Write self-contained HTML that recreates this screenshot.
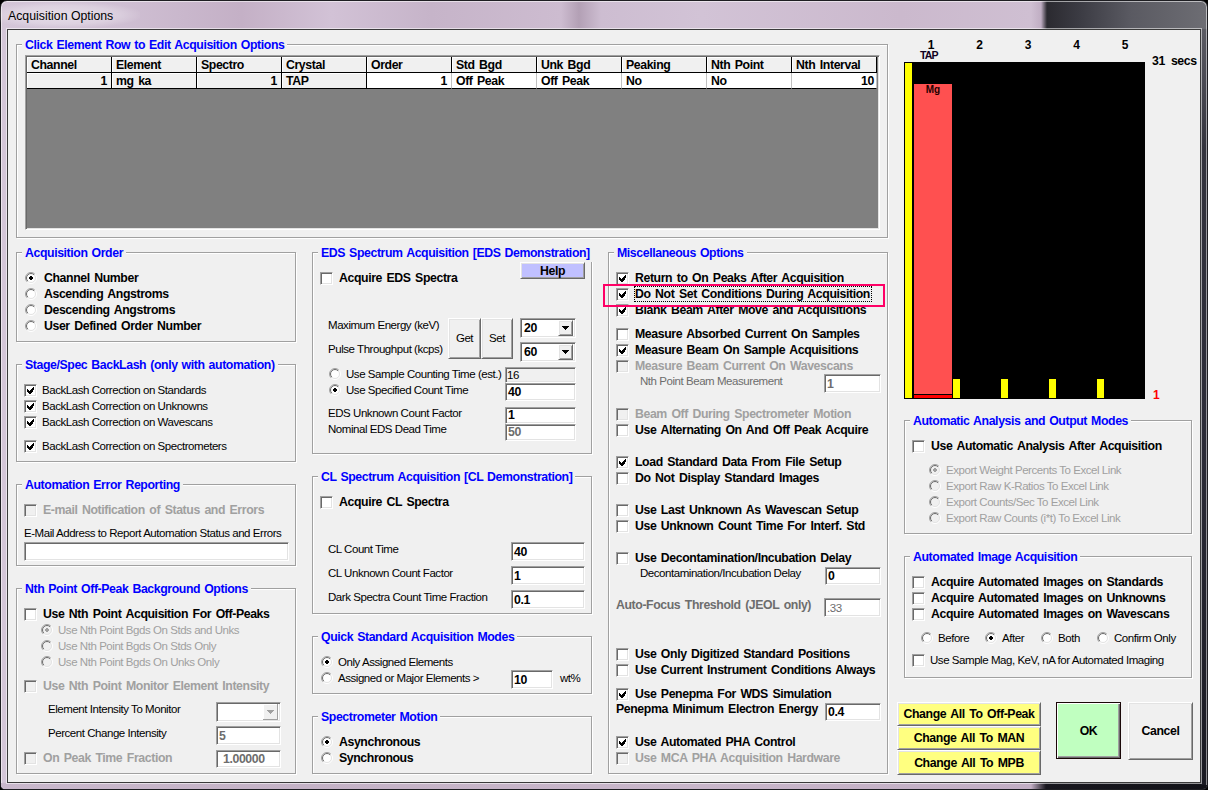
<!DOCTYPE html><html><head><meta charset="utf-8"><style>
*{margin:0;padding:0;box-sizing:border-box}
html,body{width:1208px;height:790px;overflow:hidden;background:#000}
body{position:relative;font-family:"Liberation Sans",sans-serif}
.b,.r,.gt{position:absolute;white-space:pre}
.b{font:bold 12.3px/12.3px "Liberation Sans",sans-serif;letter-spacing:-0.4px;word-spacing:1.5px}
.r{font:11.5px/11.5px "Liberation Sans",sans-serif;letter-spacing:-0.45px}
.gt{font:bold 12.3px/17px "Liberation Sans",sans-serif;letter-spacing:-0.4px;word-spacing:1px;color:#0000FF;background:#F0F0F0;padding:0 3px;height:17px}
.gb{position:absolute;border:1px solid #A0A0A0;box-shadow:inset 1px 1px 0 #fff,1px 1px 0 #fff}
.cb{position:absolute;width:13px;height:13px;border:1px solid;border-color:#A0A0A0 #fff #fff #A0A0A0;box-shadow:inset 1px 1px 0 #696969,inset -1px -1px 0 #E3E3E3}
.cb svg{left:2px!important;top:2px!important}
.rd{position:absolute}
.tb{position:absolute;border:1px solid;border-color:#A0A0A0 #fff #fff #A0A0A0;box-shadow:inset 1px 1px 0 #696969,inset -1px -1px 0 #E3E3E3}
.btn{position:absolute;border:1px solid;border-color:#fff #696969 #696969 #fff;box-shadow:inset 1px 1px 0 #E3E3E3,inset -1px -1px 0 #A0A0A0}
.dk{border-color:#1a0808;box-shadow:inset 1px 1px 0 #fff,inset -1px -1px 0 #696969,inset -2px -2px 0 #A0A0A0}
.d{color:#A0A0A0}

#frame{position:absolute;left:0;top:0;width:1208px;height:790px;border-radius:7px 7px 5px 5px;border:1px solid #1e1e22;overflow:hidden;
 background:linear-gradient(90deg,#d4c6d8 0px,#cfbfd3 120px,#c4b0c6 240px,#d2c2d6 330px,#c6b4c9 430px,#cdbcd0 560px,#b3a0b5 578px,#cdbdd1 600px,#d2c3d6 700px,#cbb9cd 900px,#cfbfd2 1030px,#c0aec3 1040px,#2b2a30 1046px,#3c3c44 1080px,#5a5a62 1130px,#6e6e74 1208px);
 box-shadow:inset 0 0 0 1px rgba(255,255,255,.55)}
#client{position:absolute;left:7px;top:29px;width:1194px;height:754px;background:#F0F0F0;border:1px solid #3a3a3a;box-shadow:0 0 0 1px rgba(255,255,255,.55)}
.hc{position:absolute;width:85px;height:16px;background:#F0F0F0;border-right:1px solid #000;border-bottom:1px solid #000;box-shadow:inset 1px 1px 0 #fff}
.dcw{position:absolute;width:85px;height:16px;background:#fff;border-right:1px solid #C0C0C0;border-bottom:1px solid #000}
</style></head><body><div id="frame"></div>
<div style="position:absolute;left:1px;top:783px;width:1206px;height:6px;border-radius:0 0 4px 4px;background:linear-gradient(90deg,#c9b8cc 0px,#c4b2c6 300px,#c8b6ca 700px,#c2aec4 1030px,#18171e 1045px,#121218 1208px)"></div>
<div style="position:absolute;left:1201px;top:29px;width:6px;height:756px;background:linear-gradient(180deg,#5c5c64 0px,#33333d 120px,#2c2c38 400px,#1a1a22 756px);box-shadow:inset -1px 0 0 rgba(255,255,255,.5)"></div>
<div id="client"></div>
<div style="position:absolute;left:-10px;top:2px;width:150px;height:26px;background:radial-gradient(ellipse at center,rgba(255,255,255,.45) 0%,rgba(255,255,255,.25) 50%,rgba(255,255,255,0) 75%)"></div>
<div class="r" style="left:8px;top:9.59px;font-size:12.3px;line-height:12.3px;letter-spacing:0">Acquisition Options</div>
<div class="gb" style="left:16px;top:44px;width:872px;height:194px"></div>
<div class="gt" style="left:22px;top:37px">Click Element Row to Edit Acquisition Options</div>
<div class="tb" style="left:25px;top:55px;width:855px;height:175px;background:#808080"></div>
<div class="hc" style="left:27px;top:57px"></div>
<div class="b" style="left:31px;top:58.59px;">Channel</div>
<div class="hc" style="left:27px;top:73px"></div>
<div class="b" style="left:27px;top:74.59px;width:80px;text-align:right">1</div>
<div class="hc" style="left:112px;top:57px"></div>
<div class="b" style="left:116px;top:58.59px;">Element</div>
<div class="hc" style="left:112px;top:73px"></div>
<div class="b" style="left:116px;top:74.59px;">mg ka</div>
<div class="hc" style="left:197px;top:57px"></div>
<div class="b" style="left:201px;top:58.59px;">Spectro</div>
<div class="hc" style="left:197px;top:73px"></div>
<div class="b" style="left:197px;top:74.59px;width:80px;text-align:right">1</div>
<div class="hc" style="left:282px;top:57px"></div>
<div class="b" style="left:286px;top:58.59px;">Crystal</div>
<div class="hc" style="left:282px;top:73px"></div>
<div class="b" style="left:286px;top:74.59px;">TAP</div>
<div class="hc" style="left:367px;top:57px"></div>
<div class="b" style="left:371px;top:58.59px;">Order</div>
<div class="dcw" style="left:367px;top:73px"></div>
<div class="b" style="left:367px;top:74.59px;width:80px;text-align:right">1</div>
<div class="hc" style="left:452px;top:57px"></div>
<div class="b" style="left:456px;top:58.59px;">Std Bgd</div>
<div class="dcw" style="left:452px;top:73px"></div>
<div class="b" style="left:456px;top:74.59px;">Off Peak</div>
<div class="hc" style="left:537px;top:57px"></div>
<div class="b" style="left:541px;top:58.59px;">Unk Bgd</div>
<div class="dcw" style="left:537px;top:73px"></div>
<div class="b" style="left:541px;top:74.59px;">Off Peak</div>
<div class="hc" style="left:622px;top:57px"></div>
<div class="b" style="left:626px;top:58.59px;">Peaking</div>
<div class="dcw" style="left:622px;top:73px"></div>
<div class="b" style="left:626px;top:74.59px;">No</div>
<div class="hc" style="left:707px;top:57px"></div>
<div class="b" style="left:711px;top:58.59px;">Nth Point</div>
<div class="dcw" style="left:707px;top:73px"></div>
<div class="b" style="left:711px;top:74.59px;">No</div>
<div class="hc" style="left:792px;top:57px"></div>
<div class="b" style="left:796px;top:58.59px;">Nth Interval</div>
<div class="dcw" style="left:792px;top:73px"></div>
<div class="b" style="left:792px;top:74.59px;width:82px;text-align:right">10</div>
<div class="gb" style="left:16px;top:252px;width:280px;height:90px"></div>
<div class="gt" style="left:22px;top:245px">Acquisition Order</div>
<svg class="rd" style="left:25px;top:272px" width="12" height="12" viewBox="0 0 12 12"><defs><linearGradient id="g1" x1="0" y1="0" x2="1" y2="1"><stop offset="0.45" stop-color="#A0A0A0"/><stop offset="0.55" stop-color="#FFFFFF"/></linearGradient><linearGradient id="g2" x1="0" y1="0" x2="1" y2="1"><stop offset="0.45" stop-color="#696969"/><stop offset="0.55" stop-color="#E3E3E3"/></linearGradient></defs><circle cx="6" cy="6" r="5.5" fill="none" stroke="url(#g1)" stroke-width="1"/><circle cx="6" cy="6" r="4.5" fill="#FFF" stroke="url(#g2)" stroke-width="1"/><rect x="4" y="5" width="4" height="2" fill="#000"/><rect x="5" y="4" width="2" height="4" fill="#000"/></svg>
<div class="b" style="left:44px;top:271.59px;">Channel Number</div>
<svg class="rd" style="left:25px;top:288px" width="12" height="12" viewBox="0 0 12 12"><defs><linearGradient id="g1" x1="0" y1="0" x2="1" y2="1"><stop offset="0.45" stop-color="#A0A0A0"/><stop offset="0.55" stop-color="#FFFFFF"/></linearGradient><linearGradient id="g2" x1="0" y1="0" x2="1" y2="1"><stop offset="0.45" stop-color="#696969"/><stop offset="0.55" stop-color="#E3E3E3"/></linearGradient></defs><circle cx="6" cy="6" r="5.5" fill="none" stroke="url(#g1)" stroke-width="1"/><circle cx="6" cy="6" r="4.5" fill="#FFF" stroke="url(#g2)" stroke-width="1"/></svg>
<div class="b" style="left:44px;top:287.59px;">Ascending Angstroms</div>
<svg class="rd" style="left:25px;top:304px" width="12" height="12" viewBox="0 0 12 12"><defs><linearGradient id="g1" x1="0" y1="0" x2="1" y2="1"><stop offset="0.45" stop-color="#A0A0A0"/><stop offset="0.55" stop-color="#FFFFFF"/></linearGradient><linearGradient id="g2" x1="0" y1="0" x2="1" y2="1"><stop offset="0.45" stop-color="#696969"/><stop offset="0.55" stop-color="#E3E3E3"/></linearGradient></defs><circle cx="6" cy="6" r="5.5" fill="none" stroke="url(#g1)" stroke-width="1"/><circle cx="6" cy="6" r="4.5" fill="#FFF" stroke="url(#g2)" stroke-width="1"/></svg>
<div class="b" style="left:44px;top:303.59px;">Descending Angstroms</div>
<svg class="rd" style="left:25px;top:320px" width="12" height="12" viewBox="0 0 12 12"><defs><linearGradient id="g1" x1="0" y1="0" x2="1" y2="1"><stop offset="0.45" stop-color="#A0A0A0"/><stop offset="0.55" stop-color="#FFFFFF"/></linearGradient><linearGradient id="g2" x1="0" y1="0" x2="1" y2="1"><stop offset="0.45" stop-color="#696969"/><stop offset="0.55" stop-color="#E3E3E3"/></linearGradient></defs><circle cx="6" cy="6" r="5.5" fill="none" stroke="url(#g1)" stroke-width="1"/><circle cx="6" cy="6" r="4.5" fill="#FFF" stroke="url(#g2)" stroke-width="1"/></svg>
<div class="b" style="left:44px;top:319.59px;">User Defined Order Number</div>
<div class="gb" style="left:16px;top:364px;width:280px;height:98px"></div>
<div class="gt" style="left:22px;top:357px">Stage/Spec BackLash (only with automation)</div>
<div class="cb" style="left:24px;top:384px;background:#FFF"><svg width="7" height="7" style="position:absolute;left:3px;top:3px" shape-rendering="crispEdges"><path d="M6 0h1v3h-1zM5 1h1v4h-1zM4 2h1v4h-1zM3 3h1v4h-1zM2 4h1v3h-1zM1 3h1v3h-1zM0 2h1v3h-1z" fill="#000"/></svg></div>
<div class="r" style="left:42px;top:385.27px;">BackLash Correction on Standards</div>
<div class="cb" style="left:24px;top:400px;background:#FFF"><svg width="7" height="7" style="position:absolute;left:3px;top:3px" shape-rendering="crispEdges"><path d="M6 0h1v3h-1zM5 1h1v4h-1zM4 2h1v4h-1zM3 3h1v4h-1zM2 4h1v3h-1zM1 3h1v3h-1zM0 2h1v3h-1z" fill="#000"/></svg></div>
<div class="r" style="left:42px;top:401.27px;">BackLash Correction on Unknowns</div>
<div class="cb" style="left:24px;top:416px;background:#FFF"><svg width="7" height="7" style="position:absolute;left:3px;top:3px" shape-rendering="crispEdges"><path d="M6 0h1v3h-1zM5 1h1v4h-1zM4 2h1v4h-1zM3 3h1v4h-1zM2 4h1v3h-1zM1 3h1v3h-1zM0 2h1v3h-1z" fill="#000"/></svg></div>
<div class="r" style="left:42px;top:417.27px;">BackLash Correction on Wavescans</div>
<div class="cb" style="left:24px;top:440px;background:#FFF"><svg width="7" height="7" style="position:absolute;left:3px;top:3px" shape-rendering="crispEdges"><path d="M6 0h1v3h-1zM5 1h1v4h-1zM4 2h1v4h-1zM3 3h1v4h-1zM2 4h1v3h-1zM1 3h1v3h-1zM0 2h1v3h-1z" fill="#000"/></svg></div>
<div class="r" style="left:42px;top:441.27px;">BackLash Correction on Spectrometers</div>
<div class="gb" style="left:16px;top:484px;width:280px;height:82px"></div>
<div class="gt" style="left:22px;top:477px">Automation Error Reporting</div>
<div class="cb" style="left:24px;top:504px;background:#F0F0F0"></div>
<div class="b" style="left:43px;top:503.59px;color:#A0A0A0;">E-mail Notification of Status and Errors</div>
<div class="r" style="left:24px;top:528.27px;">E-Mail Address to Report Automation Status and Errors</div>
<div class="tb" style="left:24px;top:542px;width:265px;height:19px;background:#FFF"></div>
<div class="gb" style="left:16px;top:588px;width:280px;height:186px"></div>
<div class="gt" style="left:22px;top:581px">Nth Point Off-Peak Background Options</div>
<div class="cb" style="left:24px;top:608px;background:#FFF"></div>
<div class="b" style="left:43px;top:607.59px;">Use Nth Point Acquisition For Off-Peaks</div>
<svg class="rd" style="left:41px;top:624px" width="12" height="12" viewBox="0 0 12 12"><defs><linearGradient id="g1" x1="0" y1="0" x2="1" y2="1"><stop offset="0.45" stop-color="#A0A0A0"/><stop offset="0.55" stop-color="#FFFFFF"/></linearGradient><linearGradient id="g2" x1="0" y1="0" x2="1" y2="1"><stop offset="0.45" stop-color="#696969"/><stop offset="0.55" stop-color="#E3E3E3"/></linearGradient></defs><circle cx="6" cy="6" r="5.5" fill="none" stroke="url(#g1)" stroke-width="1"/><circle cx="6" cy="6" r="4.5" fill="#F0F0F0" stroke="url(#g2)" stroke-width="1"/><rect x="4" y="5" width="4" height="2" fill="#A0A0A0"/><rect x="5" y="4" width="2" height="4" fill="#A0A0A0"/></svg>
<div class="r" style="left:58px;top:625.27px;color:#A0A0A0;">Use Nth Point Bgds On Stds and Unks</div>
<svg class="rd" style="left:41px;top:640px" width="12" height="12" viewBox="0 0 12 12"><defs><linearGradient id="g1" x1="0" y1="0" x2="1" y2="1"><stop offset="0.45" stop-color="#A0A0A0"/><stop offset="0.55" stop-color="#FFFFFF"/></linearGradient><linearGradient id="g2" x1="0" y1="0" x2="1" y2="1"><stop offset="0.45" stop-color="#696969"/><stop offset="0.55" stop-color="#E3E3E3"/></linearGradient></defs><circle cx="6" cy="6" r="5.5" fill="none" stroke="url(#g1)" stroke-width="1"/><circle cx="6" cy="6" r="4.5" fill="#F0F0F0" stroke="url(#g2)" stroke-width="1"/></svg>
<div class="r" style="left:58px;top:641.27px;color:#A0A0A0;">Use Nth Point Bgds On Stds Only</div>
<svg class="rd" style="left:41px;top:656px" width="12" height="12" viewBox="0 0 12 12"><defs><linearGradient id="g1" x1="0" y1="0" x2="1" y2="1"><stop offset="0.45" stop-color="#A0A0A0"/><stop offset="0.55" stop-color="#FFFFFF"/></linearGradient><linearGradient id="g2" x1="0" y1="0" x2="1" y2="1"><stop offset="0.45" stop-color="#696969"/><stop offset="0.55" stop-color="#E3E3E3"/></linearGradient></defs><circle cx="6" cy="6" r="5.5" fill="none" stroke="url(#g1)" stroke-width="1"/><circle cx="6" cy="6" r="4.5" fill="#F0F0F0" stroke="url(#g2)" stroke-width="1"/></svg>
<div class="r" style="left:58px;top:657.27px;color:#A0A0A0;">Use Nth Point Bgds On Unks Only</div>
<div class="cb" style="left:24px;top:680px;background:#F0F0F0"></div>
<div class="b" style="left:43px;top:679.59px;color:#A0A0A0;">Use Nth Point Monitor Element Intensity</div>
<div class="r" style="left:48px;top:704.27px;">Element Intensity To Monitor</div>
<div class="tb" style="left:216px;top:702px;width:65px;height:20px;background:#FFF"></div>
<div style="position:absolute;left:263px;top:704px;width:15px;height:16px;background:#F0F0F0;border-bottom:1px solid #A0A0A0;border-right:1px solid #A0A0A0;box-shadow:inset 1px 1px 0 #fff"></div>
<svg style="position:absolute;left:267px;top:710px" width="7" height="4" shape-rendering="crispEdges"><path d="M0 0h7v1h-7zM1 1h5v1h-5zM2 2h3v1h-3zM3 3h1v1h-1z" fill="#A0A0A0"/></svg>
<div class="r" style="left:48px;top:728.27px;">Percent Change Intensity</div>
<div class="tb" style="left:216px;top:726px;width:65px;height:19px;background:#FFF"></div>
<div class="b" style="left:219px;top:729.59px;color:#6D6D6D;">5</div>
<div class="cb" style="left:24px;top:752px;background:#F0F0F0"></div>
<div class="b" style="left:43px;top:751.59px;color:#A0A0A0;">On Peak Time Fraction</div>
<div class="tb" style="left:216px;top:750px;width:65px;height:18px;background:#FFF"></div>
<div class="b" style="left:223px;top:752.59px;color:#6D6D6D;">1.00000</div>
<div class="gb" style="left:312px;top:252px;width:280px;height:202px"></div>
<div class="gt" style="left:318px;top:245px">EDS Spectrum Acquisition [EDS Demonstration]</div>
<div class="btn" style="left:520px;top:262px;width:65px;height:17px;background:#C0C0FF"></div>
<div class="b" style="left:520px;top:264.65px;width:65px;text-align:center">Help</div>
<div class="cb" style="left:320px;top:272px;background:#FFF"></div>
<div class="b" style="left:339px;top:271.59px;">Acquire EDS Spectra</div>
<div class="r" style="left:328px;top:320.27px;">Maximum Energy (keV)</div>
<div class="r" style="left:328px;top:344.27px;">Pulse Throughput (kcps)</div>
<div class="btn" style="left:448px;top:318px;width:33px;height:41px;background:#F0F0F0"></div>
<div class="r" style="left:448px;top:333.05px;width:33px;text-align:center">Get</div>
<div class="btn" style="left:481px;top:318px;width:32px;height:41px;background:#F0F0F0"></div>
<div class="r" style="left:481px;top:333.05px;width:32px;text-align:center">Set</div>
<div class="tb" style="left:520px;top:318px;width:56px;height:20px;background:#FFF"></div>
<div class="btn" style="left:558px;top:320px;width:15px;height:16px;background:#F0F0F0"></div>
<svg style="position:absolute;left:562px;top:326px" width="7" height="4" shape-rendering="crispEdges"><path d="M0 0h7v1h-7zM1 1h5v1h-5zM2 2h3v1h-3zM3 3h1v1h-1z" fill="#000"/></svg>
<div class="b" style="left:524px;top:321.59px;">20</div>
<div class="tb" style="left:520px;top:342px;width:56px;height:20px;background:#FFF"></div>
<div class="btn" style="left:558px;top:344px;width:15px;height:16px;background:#F0F0F0"></div>
<svg style="position:absolute;left:562px;top:350px" width="7" height="4" shape-rendering="crispEdges"><path d="M0 0h7v1h-7zM1 1h5v1h-5zM2 2h3v1h-3zM3 3h1v1h-1z" fill="#000"/></svg>
<div class="b" style="left:524px;top:345.59px;">60</div>
<svg class="rd" style="left:329px;top:368px" width="12" height="12" viewBox="0 0 12 12"><defs><linearGradient id="g1" x1="0" y1="0" x2="1" y2="1"><stop offset="0.45" stop-color="#A0A0A0"/><stop offset="0.55" stop-color="#FFFFFF"/></linearGradient><linearGradient id="g2" x1="0" y1="0" x2="1" y2="1"><stop offset="0.45" stop-color="#696969"/><stop offset="0.55" stop-color="#E3E3E3"/></linearGradient></defs><circle cx="6" cy="6" r="5.5" fill="none" stroke="url(#g1)" stroke-width="1"/><circle cx="6" cy="6" r="4.5" fill="#FFF" stroke="url(#g2)" stroke-width="1"/></svg>
<div class="r" style="left:346px;top:369.27px;">Use Sample Counting Time (est.)</div>
<div class="tb" style="left:505px;top:367px;width:71px;height:16px;background:#F0F0F0"></div>
<div class="r" style="left:507px;top:370.27px;">16</div>
<svg class="rd" style="left:329px;top:384px" width="12" height="12" viewBox="0 0 12 12"><defs><linearGradient id="g1" x1="0" y1="0" x2="1" y2="1"><stop offset="0.45" stop-color="#A0A0A0"/><stop offset="0.55" stop-color="#FFFFFF"/></linearGradient><linearGradient id="g2" x1="0" y1="0" x2="1" y2="1"><stop offset="0.45" stop-color="#696969"/><stop offset="0.55" stop-color="#E3E3E3"/></linearGradient></defs><circle cx="6" cy="6" r="5.5" fill="none" stroke="url(#g1)" stroke-width="1"/><circle cx="6" cy="6" r="4.5" fill="#FFF" stroke="url(#g2)" stroke-width="1"/><rect x="4" y="5" width="4" height="2" fill="#000"/><rect x="5" y="4" width="2" height="4" fill="#000"/></svg>
<div class="r" style="left:346px;top:385.27px;">Use Specified Count Time</div>
<div class="tb" style="left:505px;top:383px;width:71px;height:18px;background:#FFF"></div>
<div class="b" style="left:508px;top:385.59px;">40</div>
<div class="r" style="left:328px;top:408.27px;">EDS Unknown Count Factor</div>
<div class="tb" style="left:505px;top:407px;width:71px;height:17px;background:#FFF"></div>
<div class="b" style="left:508px;top:408.59px;">1</div>
<div class="r" style="left:328px;top:424.27px;">Nominal EDS Dead Time</div>
<div class="tb" style="left:505px;top:424px;width:71px;height:17px;background:#FFF"></div>
<div class="b" style="left:508px;top:425.59px;color:#6D6D6D;">50</div>
<div class="gb" style="left:312px;top:476px;width:280px;height:138px"></div>
<div class="gt" style="left:318px;top:469px">CL Spectrum Acquisition [CL Demonstration]</div>
<div class="cb" style="left:320px;top:496px;background:#FFF"></div>
<div class="b" style="left:339px;top:495.59px;">Acquire CL Spectra</div>
<div class="r" style="left:328px;top:544.27px;">CL Count Time</div>
<div class="tb" style="left:511px;top:542px;width:74px;height:19px;background:#FFF"></div>
<div class="b" style="left:514px;top:545.59px;">40</div>
<div class="r" style="left:328px;top:568.27px;">CL Unknown Count Factor</div>
<div class="tb" style="left:511px;top:566px;width:74px;height:19px;background:#FFF"></div>
<div class="b" style="left:514px;top:569.59px;">1</div>
<div class="r" style="left:328px;top:592.27px;">Dark Spectra Count Time Fraction</div>
<div class="tb" style="left:511px;top:590px;width:74px;height:19px;background:#FFF"></div>
<div class="b" style="left:514px;top:593.59px;">0.1</div>
<div class="gb" style="left:312px;top:636px;width:280px;height:58px"></div>
<div class="gt" style="left:318px;top:629px">Quick Standard Acquisition Modes</div>
<svg class="rd" style="left:321px;top:656px" width="12" height="12" viewBox="0 0 12 12"><defs><linearGradient id="g1" x1="0" y1="0" x2="1" y2="1"><stop offset="0.45" stop-color="#A0A0A0"/><stop offset="0.55" stop-color="#FFFFFF"/></linearGradient><linearGradient id="g2" x1="0" y1="0" x2="1" y2="1"><stop offset="0.45" stop-color="#696969"/><stop offset="0.55" stop-color="#E3E3E3"/></linearGradient></defs><circle cx="6" cy="6" r="5.5" fill="none" stroke="url(#g1)" stroke-width="1"/><circle cx="6" cy="6" r="4.5" fill="#FFF" stroke="url(#g2)" stroke-width="1"/><rect x="4" y="5" width="4" height="2" fill="#000"/><rect x="5" y="4" width="2" height="4" fill="#000"/></svg>
<div class="r" style="left:338px;top:657.27px;">Only Assigned Elements</div>
<svg class="rd" style="left:321px;top:672px" width="12" height="12" viewBox="0 0 12 12"><defs><linearGradient id="g1" x1="0" y1="0" x2="1" y2="1"><stop offset="0.45" stop-color="#A0A0A0"/><stop offset="0.55" stop-color="#FFFFFF"/></linearGradient><linearGradient id="g2" x1="0" y1="0" x2="1" y2="1"><stop offset="0.45" stop-color="#696969"/><stop offset="0.55" stop-color="#E3E3E3"/></linearGradient></defs><circle cx="6" cy="6" r="5.5" fill="none" stroke="url(#g1)" stroke-width="1"/><circle cx="6" cy="6" r="4.5" fill="#FFF" stroke="url(#g2)" stroke-width="1"/></svg>
<div class="r" style="left:338px;top:673.27px;">Assigned or Major Elements ></div>
<div class="tb" style="left:511px;top:670px;width:42px;height:19px;background:#FFF"></div>
<div class="b" style="left:514px;top:673.59px;">10</div>
<div class="r" style="left:560px;top:673.27px;">wt%</div>
<div class="gb" style="left:312px;top:716px;width:280px;height:58px"></div>
<div class="gt" style="left:318px;top:709px">Spectrometer Motion</div>
<svg class="rd" style="left:321px;top:736px" width="12" height="12" viewBox="0 0 12 12"><defs><linearGradient id="g1" x1="0" y1="0" x2="1" y2="1"><stop offset="0.45" stop-color="#A0A0A0"/><stop offset="0.55" stop-color="#FFFFFF"/></linearGradient><linearGradient id="g2" x1="0" y1="0" x2="1" y2="1"><stop offset="0.45" stop-color="#696969"/><stop offset="0.55" stop-color="#E3E3E3"/></linearGradient></defs><circle cx="6" cy="6" r="5.5" fill="none" stroke="url(#g1)" stroke-width="1"/><circle cx="6" cy="6" r="4.5" fill="#FFF" stroke="url(#g2)" stroke-width="1"/><rect x="4" y="5" width="4" height="2" fill="#000"/><rect x="5" y="4" width="2" height="4" fill="#000"/></svg>
<div class="b" style="left:339px;top:735.59px;">Asynchronous</div>
<svg class="rd" style="left:321px;top:752px" width="12" height="12" viewBox="0 0 12 12"><defs><linearGradient id="g1" x1="0" y1="0" x2="1" y2="1"><stop offset="0.45" stop-color="#A0A0A0"/><stop offset="0.55" stop-color="#FFFFFF"/></linearGradient><linearGradient id="g2" x1="0" y1="0" x2="1" y2="1"><stop offset="0.45" stop-color="#696969"/><stop offset="0.55" stop-color="#E3E3E3"/></linearGradient></defs><circle cx="6" cy="6" r="5.5" fill="none" stroke="url(#g1)" stroke-width="1"/><circle cx="6" cy="6" r="4.5" fill="#FFF" stroke="url(#g2)" stroke-width="1"/></svg>
<div class="b" style="left:339px;top:751.59px;">Synchronous</div>
<div class="gb" style="left:608px;top:252px;width:280px;height:522px"></div>
<div class="gt" style="left:614px;top:245px">Miscellaneous Options</div>
<div class="cb" style="left:616px;top:272px;background:#FFF"><svg width="7" height="7" style="position:absolute;left:3px;top:3px" shape-rendering="crispEdges"><path d="M6 0h1v3h-1zM5 1h1v4h-1zM4 2h1v4h-1zM3 3h1v4h-1zM2 4h1v3h-1zM1 3h1v3h-1zM0 2h1v3h-1z" fill="#000"/></svg></div>
<div class="b" style="left:635px;top:271.59px;">Return to On Peaks After Acquisition</div>
<div class="cb" style="left:616px;top:288px;background:#FFF"><svg width="7" height="7" style="position:absolute;left:3px;top:3px" shape-rendering="crispEdges"><path d="M6 0h1v3h-1zM5 1h1v4h-1zM4 2h1v4h-1zM3 3h1v4h-1zM2 4h1v3h-1zM1 3h1v3h-1zM0 2h1v3h-1z" fill="#000"/></svg></div>
<div class="b" style="left:635px;top:287.59px;">Do Not Set Conditions During Acquisition</div>
<div class="cb" style="left:616px;top:304px;background:#FFF"><svg width="7" height="7" style="position:absolute;left:3px;top:3px" shape-rendering="crispEdges"><path d="M6 0h1v3h-1zM5 1h1v4h-1zM4 2h1v4h-1zM3 3h1v4h-1zM2 4h1v3h-1zM1 3h1v3h-1zM0 2h1v3h-1z" fill="#000"/></svg></div>
<div class="b" style="left:635px;top:303.59px;">Blank Beam After Move and Acquisitions</div>
<div class="cb" style="left:616px;top:328px;background:#FFF"></div>
<div class="b" style="left:635px;top:327.59px;">Measure Absorbed Current On Samples</div>
<div class="cb" style="left:616px;top:344px;background:#FFF"><svg width="7" height="7" style="position:absolute;left:3px;top:3px" shape-rendering="crispEdges"><path d="M6 0h1v3h-1zM5 1h1v4h-1zM4 2h1v4h-1zM3 3h1v4h-1zM2 4h1v3h-1zM1 3h1v3h-1zM0 2h1v3h-1z" fill="#000"/></svg></div>
<div class="b" style="left:635px;top:343.59px;">Measure Beam On Sample Acquisitions</div>
<div class="cb" style="left:616px;top:360px;background:#F0F0F0"></div>
<div class="b" style="left:635px;top:359.59px;color:#A0A0A0;">Measure Beam Current On Wavescans</div>
<div class="cb" style="left:616px;top:408px;background:#F0F0F0"></div>
<div class="b" style="left:635px;top:407.59px;color:#A0A0A0;">Beam Off During Spectrometer Motion</div>
<div class="cb" style="left:616px;top:424px;background:#FFF"></div>
<div class="b" style="left:635px;top:423.59px;">Use Alternating On And Off Peak Acquire</div>
<div class="cb" style="left:616px;top:456px;background:#FFF"><svg width="7" height="7" style="position:absolute;left:3px;top:3px" shape-rendering="crispEdges"><path d="M6 0h1v3h-1zM5 1h1v4h-1zM4 2h1v4h-1zM3 3h1v4h-1zM2 4h1v3h-1zM1 3h1v3h-1zM0 2h1v3h-1z" fill="#000"/></svg></div>
<div class="b" style="left:635px;top:455.59px;">Load Standard Data From File Setup</div>
<div class="cb" style="left:616px;top:472px;background:#FFF"></div>
<div class="b" style="left:635px;top:471.59px;">Do Not Display Standard Images</div>
<div class="cb" style="left:616px;top:504px;background:#FFF"></div>
<div class="b" style="left:635px;top:503.59px;">Use Last Unknown As Wavescan Setup</div>
<div class="cb" style="left:616px;top:520px;background:#FFF"></div>
<div class="b" style="left:635px;top:519.59px;">Use Unknown Count Time For Interf. Std</div>
<div class="cb" style="left:616px;top:552px;background:#FFF"></div>
<div class="b" style="left:635px;top:551.59px;">Use Decontamination/Incubation Delay</div>
<div class="cb" style="left:616px;top:648px;background:#FFF"></div>
<div class="b" style="left:635px;top:647.59px;">Use Only Digitized Standard Positions</div>
<div class="cb" style="left:616px;top:664px;background:#FFF"></div>
<div class="b" style="left:635px;top:663.59px;">Use Current Instrument Conditions Always</div>
<div class="cb" style="left:616px;top:688px;background:#FFF"><svg width="7" height="7" style="position:absolute;left:3px;top:3px" shape-rendering="crispEdges"><path d="M6 0h1v3h-1zM5 1h1v4h-1zM4 2h1v4h-1zM3 3h1v4h-1zM2 4h1v3h-1zM1 3h1v3h-1zM0 2h1v3h-1z" fill="#000"/></svg></div>
<div class="b" style="left:635px;top:687.59px;">Use Penepma For WDS Simulation</div>
<div class="cb" style="left:616px;top:736px;background:#FFF"><svg width="7" height="7" style="position:absolute;left:3px;top:3px" shape-rendering="crispEdges"><path d="M6 0h1v3h-1zM5 1h1v4h-1zM4 2h1v4h-1zM3 3h1v4h-1zM2 4h1v3h-1zM1 3h1v3h-1zM0 2h1v3h-1z" fill="#000"/></svg></div>
<div class="b" style="left:635px;top:735.59px;">Use Automated PHA Control</div>
<div class="cb" style="left:616px;top:752px;background:#F0F0F0"></div>
<div class="b" style="left:635px;top:751.59px;color:#A0A0A0;">Use MCA PHA Acquisition Hardware</div>
<div class="r" style="left:640px;top:376.27px;color:#6D6D6D;">Nth Point Beam Measurement</div>
<div class="tb" style="left:824px;top:374px;width:57px;height:19px;background:#FFF"></div>
<div class="b" style="left:827px;top:377.59px;color:#6D6D6D;">1</div>
<div class="r" style="left:640px;top:568.27px;">Decontamination/Incubation Delay</div>
<div class="tb" style="left:825px;top:567px;width:56px;height:18px;background:#FFF"></div>
<div class="b" style="left:828px;top:569.59px;">0</div>
<div class="b" style="left:616px;top:598.59px;color:#6D6D6D;">Auto-Focus Threshold (JEOL only)</div>
<div class="tb" style="left:824px;top:598px;width:57px;height:19px;background:#FFF"></div>
<div class="r" style="left:827px;top:603.27px;color:#6D6D6D;">.33</div>
<div class="b" style="left:616px;top:702.59px;">Penepma Minimum Electron Energy</div>
<div class="tb" style="left:825px;top:703px;width:56px;height:18px;background:#FFF"></div>
<div class="b" style="left:828px;top:705.59px;">0.4</div>
<div style="position:absolute;left:634px;top:286px;width:238px;height:16px;border:1px dotted #000"></div>
<div style="position:absolute;left:603px;top:284px;width:282px;height:23px;border:2px solid #FF0066"></div>
<div class="b" style="left:921.0px;top:39px;width:20px;text-align:center;font-size:12px;letter-spacing:0">1</div>
<div class="b" style="left:969.5px;top:39px;width:20px;text-align:center;font-size:12px;letter-spacing:0">2</div>
<div class="b" style="left:1018.0px;top:39px;width:20px;text-align:center;font-size:12px;letter-spacing:0">3</div>
<div class="b" style="left:1066.5px;top:39px;width:20px;text-align:center;font-size:12px;letter-spacing:0">4</div>
<div class="b" style="left:1115.0px;top:39px;width:20px;text-align:center;font-size:12px;letter-spacing:0">5</div>
<div class="b" style="left:920px;top:50px;font-size:10.6px;line-height:10px;color:#102;letter-spacing:-0.9px">TAP</div>
<div class="b" style="left:1152px;top:55px;word-spacing:3px">31 secs</div>
<div style="position:absolute;left:904px;top:62px;width:241px;height:337px;background:#000"></div>
<div style="position:absolute;left:905px;top:63px;width:7px;height:335px;background:#FFFF00"></div>
<div style="position:absolute;left:914px;top:84px;width:38px;height:314px;background:#FF5050"></div>
<div style="position:absolute;left:914px;top:394px;width:38px;height:4px;background:#FF0000;border-top:1px solid #000"></div>
<div class="b" style="left:914px;top:84px;width:38px;text-align:center;font-size:10px;line-height:12px;color:#200;letter-spacing:0">Mg</div>
<div style="position:absolute;left:953px;top:379px;width:7px;height:19px;background:#FFFF00"></div>
<div style="position:absolute;left:1001px;top:379px;width:7px;height:19px;background:#FFFF00"></div>
<div style="position:absolute;left:1049px;top:379px;width:7px;height:19px;background:#FFFF00"></div>
<div style="position:absolute;left:1097px;top:379px;width:7px;height:19px;background:#FFFF00"></div>
<div class="b" style="left:1153px;top:389px;color:#FF0000;font-size:12px;letter-spacing:0">1</div>
<div class="gb" style="left:904px;top:420px;width:288px;height:114px"></div>
<div class="gt" style="left:910px;top:413px">Automatic Analysis and Output Modes</div>
<div class="cb" style="left:912px;top:440px;background:#FFF"></div>
<div class="b" style="left:931px;top:439.59px;">Use Automatic Analysis After Acquisition</div>
<svg class="rd" style="left:929px;top:464px" width="12" height="12" viewBox="0 0 12 12"><defs><linearGradient id="g1" x1="0" y1="0" x2="1" y2="1"><stop offset="0.45" stop-color="#A0A0A0"/><stop offset="0.55" stop-color="#FFFFFF"/></linearGradient><linearGradient id="g2" x1="0" y1="0" x2="1" y2="1"><stop offset="0.45" stop-color="#696969"/><stop offset="0.55" stop-color="#E3E3E3"/></linearGradient></defs><circle cx="6" cy="6" r="5.5" fill="none" stroke="url(#g1)" stroke-width="1"/><circle cx="6" cy="6" r="4.5" fill="#F0F0F0" stroke="url(#g2)" stroke-width="1"/><rect x="4" y="5" width="4" height="2" fill="#A0A0A0"/><rect x="5" y="4" width="2" height="4" fill="#A0A0A0"/></svg>
<div class="r" style="left:946px;top:465.27px;color:#A0A0A0;">Export Weight Percents To Excel Link</div>
<svg class="rd" style="left:929px;top:480px" width="12" height="12" viewBox="0 0 12 12"><defs><linearGradient id="g1" x1="0" y1="0" x2="1" y2="1"><stop offset="0.45" stop-color="#A0A0A0"/><stop offset="0.55" stop-color="#FFFFFF"/></linearGradient><linearGradient id="g2" x1="0" y1="0" x2="1" y2="1"><stop offset="0.45" stop-color="#696969"/><stop offset="0.55" stop-color="#E3E3E3"/></linearGradient></defs><circle cx="6" cy="6" r="5.5" fill="none" stroke="url(#g1)" stroke-width="1"/><circle cx="6" cy="6" r="4.5" fill="#F0F0F0" stroke="url(#g2)" stroke-width="1"/></svg>
<div class="r" style="left:946px;top:481.27px;color:#A0A0A0;">Export Raw K-Ratios To Excel Link</div>
<svg class="rd" style="left:929px;top:496px" width="12" height="12" viewBox="0 0 12 12"><defs><linearGradient id="g1" x1="0" y1="0" x2="1" y2="1"><stop offset="0.45" stop-color="#A0A0A0"/><stop offset="0.55" stop-color="#FFFFFF"/></linearGradient><linearGradient id="g2" x1="0" y1="0" x2="1" y2="1"><stop offset="0.45" stop-color="#696969"/><stop offset="0.55" stop-color="#E3E3E3"/></linearGradient></defs><circle cx="6" cy="6" r="5.5" fill="none" stroke="url(#g1)" stroke-width="1"/><circle cx="6" cy="6" r="4.5" fill="#F0F0F0" stroke="url(#g2)" stroke-width="1"/></svg>
<div class="r" style="left:946px;top:497.27px;color:#A0A0A0;">Export Counts/Sec To Excel Link</div>
<svg class="rd" style="left:929px;top:512px" width="12" height="12" viewBox="0 0 12 12"><defs><linearGradient id="g1" x1="0" y1="0" x2="1" y2="1"><stop offset="0.45" stop-color="#A0A0A0"/><stop offset="0.55" stop-color="#FFFFFF"/></linearGradient><linearGradient id="g2" x1="0" y1="0" x2="1" y2="1"><stop offset="0.45" stop-color="#696969"/><stop offset="0.55" stop-color="#E3E3E3"/></linearGradient></defs><circle cx="6" cy="6" r="5.5" fill="none" stroke="url(#g1)" stroke-width="1"/><circle cx="6" cy="6" r="4.5" fill="#F0F0F0" stroke="url(#g2)" stroke-width="1"/></svg>
<div class="r" style="left:946px;top:513.27px;color:#A0A0A0;">Export Raw Counts (i*t) To Excel Link</div>
<div class="gb" style="left:904px;top:556px;width:288px;height:122px"></div>
<div class="gt" style="left:910px;top:549px">Automated Image Acquisition</div>
<div class="cb" style="left:912px;top:576px;background:#FFF"></div>
<div class="b" style="left:931px;top:575.59px;">Acquire Automated Images on Standards</div>
<div class="cb" style="left:912px;top:592px;background:#FFF"></div>
<div class="b" style="left:931px;top:591.59px;">Acquire Automated Images on Unknowns</div>
<div class="cb" style="left:912px;top:608px;background:#FFF"></div>
<div class="b" style="left:931px;top:607.59px;">Acquire Automated Images on Wavescans</div>
<svg class="rd" style="left:921px;top:632px" width="12" height="12" viewBox="0 0 12 12"><defs><linearGradient id="g1" x1="0" y1="0" x2="1" y2="1"><stop offset="0.45" stop-color="#A0A0A0"/><stop offset="0.55" stop-color="#FFFFFF"/></linearGradient><linearGradient id="g2" x1="0" y1="0" x2="1" y2="1"><stop offset="0.45" stop-color="#696969"/><stop offset="0.55" stop-color="#E3E3E3"/></linearGradient></defs><circle cx="6" cy="6" r="5.5" fill="none" stroke="url(#g1)" stroke-width="1"/><circle cx="6" cy="6" r="4.5" fill="#FFF" stroke="url(#g2)" stroke-width="1"/></svg>
<div class="r" style="left:938px;top:633.27px;">Before</div>
<svg class="rd" style="left:985px;top:632px" width="12" height="12" viewBox="0 0 12 12"><defs><linearGradient id="g1" x1="0" y1="0" x2="1" y2="1"><stop offset="0.45" stop-color="#A0A0A0"/><stop offset="0.55" stop-color="#FFFFFF"/></linearGradient><linearGradient id="g2" x1="0" y1="0" x2="1" y2="1"><stop offset="0.45" stop-color="#696969"/><stop offset="0.55" stop-color="#E3E3E3"/></linearGradient></defs><circle cx="6" cy="6" r="5.5" fill="none" stroke="url(#g1)" stroke-width="1"/><circle cx="6" cy="6" r="4.5" fill="#FFF" stroke="url(#g2)" stroke-width="1"/><rect x="4" y="5" width="4" height="2" fill="#000"/><rect x="5" y="4" width="2" height="4" fill="#000"/></svg>
<div class="r" style="left:1002px;top:633.27px;">After</div>
<svg class="rd" style="left:1041px;top:632px" width="12" height="12" viewBox="0 0 12 12"><defs><linearGradient id="g1" x1="0" y1="0" x2="1" y2="1"><stop offset="0.45" stop-color="#A0A0A0"/><stop offset="0.55" stop-color="#FFFFFF"/></linearGradient><linearGradient id="g2" x1="0" y1="0" x2="1" y2="1"><stop offset="0.45" stop-color="#696969"/><stop offset="0.55" stop-color="#E3E3E3"/></linearGradient></defs><circle cx="6" cy="6" r="5.5" fill="none" stroke="url(#g1)" stroke-width="1"/><circle cx="6" cy="6" r="4.5" fill="#FFF" stroke="url(#g2)" stroke-width="1"/></svg>
<div class="r" style="left:1058px;top:633.27px;">Both</div>
<svg class="rd" style="left:1097px;top:632px" width="12" height="12" viewBox="0 0 12 12"><defs><linearGradient id="g1" x1="0" y1="0" x2="1" y2="1"><stop offset="0.45" stop-color="#A0A0A0"/><stop offset="0.55" stop-color="#FFFFFF"/></linearGradient><linearGradient id="g2" x1="0" y1="0" x2="1" y2="1"><stop offset="0.45" stop-color="#696969"/><stop offset="0.55" stop-color="#E3E3E3"/></linearGradient></defs><circle cx="6" cy="6" r="5.5" fill="none" stroke="url(#g1)" stroke-width="1"/><circle cx="6" cy="6" r="4.5" fill="#FFF" stroke="url(#g2)" stroke-width="1"/></svg>
<div class="r" style="left:1114px;top:633.27px;">Confirm Only</div>
<div class="cb" style="left:912px;top:654px;background:#FFF"></div>
<div class="r" style="left:930px;top:655.27px;">Use Sample Mag, KeV, nA for Automated Imaging</div>
<div class="btn" style="left:897px;top:702px;width:144px;height:24px;background:#FFFF80"></div>
<div class="b" style="left:897px;top:708.15px;width:144px;text-align:center">Change All To Off-Peak</div>
<div class="btn" style="left:897px;top:726px;width:144px;height:24px;background:#FFFF80"></div>
<div class="b" style="left:897px;top:732.15px;width:144px;text-align:center">Change All To MAN</div>
<div class="btn" style="left:897px;top:750px;width:144px;height:25px;background:#FFFF80"></div>
<div class="b" style="left:897px;top:756.65px;width:144px;text-align:center">Change All To MPB</div>
<div class="btn dk" style="left:1056px;top:702px;width:65px;height:57px;background:#C0FFC0"></div>
<div class="b" style="left:1056px;top:724.65px;width:65px;text-align:center">OK</div>
<div class="btn" style="left:1128px;top:702px;width:65px;height:58px;background:#F0F0F0"></div>
<div class="b" style="left:1128px;top:725.15px;width:65px;text-align:center">Cancel</div></body></html>
